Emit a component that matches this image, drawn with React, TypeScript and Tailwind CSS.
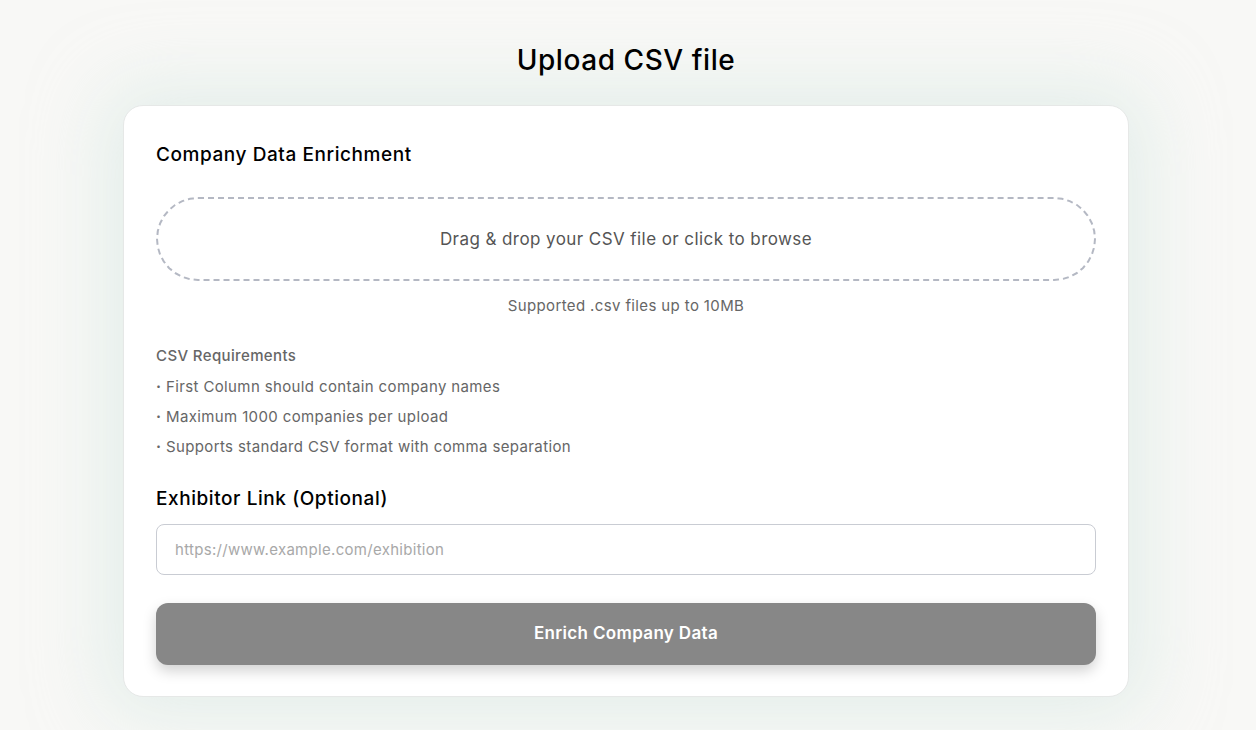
import React from "react";

const requirements = [
  "First Column should contain company names",
  "Maximum 1000 companies per upload",
  "Supports standard CSV format with comma separation",
];

const UploadCsv = () => {
  return (
    <div
      className="min-h-[730px] w-full bg-[#f8f8f6] pt-[40px] pr-[4px]"
      style={{ fontFamily: "Inter, 'Noto Sans', sans-serif" }}
    >
      <h1 className="text-center text-[28px] leading-[40px] font-medium tracking-[0.02em] text-black mb-[25px]">
        Upload CSV file
      </h1>

      <div className="mx-auto w-[1006px] rounded-[20px] border border-[#e6e8e7] bg-white px-[32px] pt-[35px] pb-[31px] shadow-[0_0_70px_20px_rgba(214,232,226,0.55)]">
        <h2 className="text-[19px] leading-[28px] font-medium tracking-[0.03em] text-black">
          Company Data Enrichment
        </h2>

        <div className="mt-[28px] flex h-[84px] cursor-pointer items-center justify-center rounded-full border-2 border-dashed border-[#b4b8c3]">
          <span className="pt-[1px] text-[17px] tracking-[0.025em] text-[#555555]">
            Drag &amp; drop your CSV file or click to browse
          </span>
        </div>

        <p className="mt-[15px] text-center text-[15px] leading-[20px] tracking-[0.025em] text-[#666666]">
          Supported .csv files up to 10MB
        </p>

        <div className="mt-[30px]">
          <h3 className="text-[15px] leading-[20px] font-medium tracking-[0.025em] text-[#666666]">
            CSV Requirements
          </h3>
          <ul className="mt-[11px] flex flex-col gap-[10px]">
            {requirements.map((r) => (
              <li key={r} className="text-[15px] leading-[20px] tracking-[0.025em] text-[#666666]">
                <span className="font-bold">·</span> {r}
              </li>
            ))}
          </ul>
        </div>

        <h2 className="mt-[28px] text-[19px] leading-[28px] font-medium tracking-[0.03em] text-black">
          Exhibitor Link (Optional)
        </h2>
        <input
          type="text"
          placeholder="https://www.example.com/exhibition"
          className="mt-[11px] h-[51px] w-full rounded-[8px] border border-[#c9ccd3] px-[18px] text-[15px] tracking-[0.02em] text-[#333] outline-none placeholder:text-[#a8a8a8]"
        />

        <button className="mt-[28px] h-[62px] w-full rounded-[12px] bg-[#878787] text-[17px] font-semibold tracking-[0.02em] text-white shadow-[0_6px_14px_rgba(0,0,0,0.18)]">
          Enrich Company Data
        </button>
      </div>
    </div>
  );
};

export default function App() {
  return <UploadCsv />;
}
